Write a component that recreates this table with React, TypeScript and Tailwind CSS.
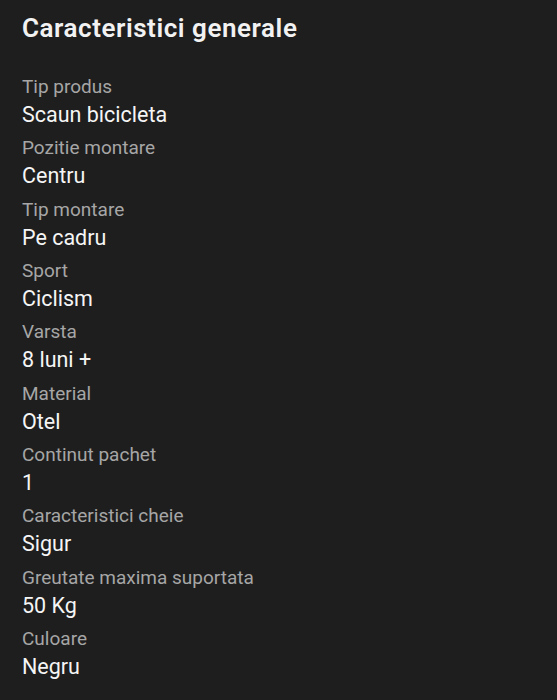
export default function App() {
  const specs = [
    { label: 'Tip produs', value: 'Scaun bicicleta' },
    { label: 'Pozitie montare', value: 'Centru' },
    { label: 'Tip montare', value: 'Pe cadru' },
    { label: 'Sport', value: 'Ciclism' },
    { label: 'Varsta', value: '8 luni +' },
    { label: 'Material', value: 'Otel' },
    { label: 'Continut pachet', value: '1' },
    { label: 'Caracteristici cheie', value: 'Sigur' },
    { label: 'Greutate maxima suportata', value: '50 Kg' },
    { label: 'Culoare', value: 'Negru' },
  ];

  return (
    <main className="min-h-[700px] w-full bg-[#1e1e1e] px-[22px] pt-3 font-['Roboto',sans-serif]">
      <h1 className="text-[26px] leading-[33px] font-semibold tracking-[0.55px] text-[#f2f2f2]">
        Caracteristici generale
      </h1>

      <dl className="mt-[29px] flex flex-col gap-[5.33px]">
        {specs.map((spec) => (
          <div key={spec.label}>
            <dt className="text-[19px] leading-[26px] text-[#a6a6a6]">{spec.label}</dt>
            <dd className="text-[21.5px] leading-[30px] text-[#f5f5f5]">{spec.value}</dd>
          </div>
        ))}
      </dl>
    </main>
  );
}
